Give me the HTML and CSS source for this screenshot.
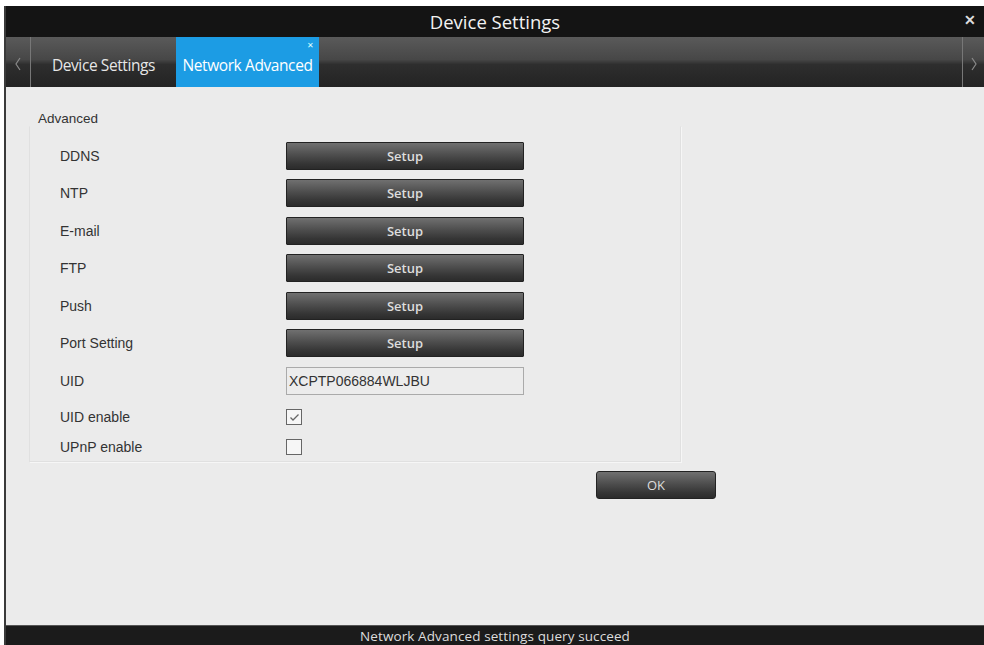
FILE: index.html
```html
<!DOCTYPE html>
<html lang="en">
<head>
  <meta charset="UTF-8">
  <title>Device Settings</title>
  <link rel="stylesheet" href="styles.css">
</head>
<body>
  <div class="window">
    <div class="titlebar">
      <span class="title">Device Settings</span>
      <span class="close">&#x2715;</span>
    </div>

    <div class="tabbar">
      <div class="arrow left">
        <svg width="8" height="14" viewBox="0 0 8 14"><polyline points="6,1 2,7 6,13" fill="none" stroke="#8a8a8a" stroke-width="1.2"/></svg>
      </div>
      <div class="tab">Device Settings</div>
      <div class="tab active">
        Network Advanced
        <span class="tab-close">&#x2715;</span>
      </div>
      <div class="tab-fill"></div>
      <div class="arrow right">
        <svg width="8" height="14" viewBox="0 0 8 14"><polyline points="2,1 6,7 2,13" fill="none" stroke="#8a8a8a" stroke-width="1.2"/></svg>
      </div>
    </div>

    <div class="content">
      <div class="group-title">Advanced</div>
      <div class="group">
        <div class="row"><span class="lbl">DDNS</span><button class="setup">Setup</button></div>
        <div class="row"><span class="lbl">NTP</span><button class="setup">Setup</button></div>
        <div class="row"><span class="lbl">E-mail</span><button class="setup">Setup</button></div>
        <div class="row"><span class="lbl">FTP</span><button class="setup">Setup</button></div>
        <div class="row"><span class="lbl">Push</span><button class="setup">Setup</button></div>
        <div class="row"><span class="lbl">Port Setting</span><button class="setup">Setup</button></div>
        <div class="row"><span class="lbl">UID</span><input class="uid" type="text" value="XCPTP066884WLJBU"></div>
        <div class="row check"><span class="lbl">UID enable</span>
          <span class="box">
            <svg width="13" height="13" viewBox="0 0 13 13"><polyline points="2.5,6.5 5,9 10.5,3.5" fill="none" stroke="#666" stroke-width="1.3"/></svg>
          </span>
        </div>
        <div class="row check"><span class="lbl">UPnP enable</span><span class="box"></span></div>
      </div>
      <div class="actions">
        <button class="ok">OK</button>
      </div>
    </div>

    <div class="statusbar">Network Advanced settings query succeed</div>
  </div>
</body>
</html>
```

FILE: styles.css
```css
body { margin: 0; background: #fff; font-family: "Liberation Sans", Arial, sans-serif; }

.window { margin: 6px 0 0 4px; width: 980px; height: 639px; display: flex; flex-direction: column; background: #ebebeb; border-left: 2px solid #3a3a3a; box-sizing: border-box; }

.titlebar { height: 31px; background: #141414; display: flex; align-items: center; justify-content: center; position: relative; }
.title { font-family: "Open Sans", sans-serif; font-size: 18.5px; color: #f2f2f2; }
.close { position: absolute; right: 8px; top: 6px; color: #ddd; font-size: 14px; font-weight: bold; }

.tabbar { height: 50px; display: flex; background: linear-gradient(#5a5a5a, #474747 45%, #2e2e2e 55%, #232323); }
.arrow { width: 24px; display: flex; align-items: center; justify-content: center; padding-top: 4px; }
.arrow.left { border-right: 1px solid #777; }
.arrow.right { width: 21px; border-left: 1px solid #777; }
.tab { width: 145px; display: flex; align-items: center; justify-content: center; padding-top: 6px; box-sizing: border-box; font-family: "Open Sans", sans-serif; font-size: 15.5px; letter-spacing: -0.4px; color: #e6e6e6; white-space: nowrap; }
.tab.active { width: 143px; background: #1c9ce4; color: #fff; position: relative; }
.tab-close { position: absolute; right: 5px; top: 2px; font-size: 8px; color: #dff; }
.tab-fill { flex: 1; }

.content { flex: 1; padding: 24px 0 0 23px; position: relative; }
.group-title { font-size: 13.5px; color: #333; margin-left: 9px; }
.group { width: 652px; height: 336px; box-sizing: border-box; margin-top: 0; padding: 14.5px 0 0 30px; border: 1px solid #e0e0e0; border-top-color: #ebebeb; box-shadow: 1px 1px 0 #f6f6f6; }

.row { display: flex; align-items: center; height: 28px; margin-bottom: 9.6px; }
.lbl { width: 226px; font-size: 14px; color: #333; }
.setup { width: 238px; height: 28px; border: 1px solid #222; border-radius: 1px; background: linear-gradient(#707070, #4e4e4e 45%, #353535 80%, #2b2b2b); color: #ddd; font-family: "Open Sans", sans-serif; font-weight: 600; font-size: 13px; padding: 0; }
.uid { width: 238px; height: 28px; box-sizing: border-box; border: 1px solid #aaa; background: #ececec; padding: 0 2px; font-family: "Liberation Sans", Arial, sans-serif; font-size: 14px; color: #333; }

.row.check { height: 16px; margin: 14px 0 0; }
.box { width: 14px; height: 14px; border: 1px solid #666; background: #f6f6f6; display: flex; align-items: center; justify-content: center; }

.actions { width: 687px; display: flex; justify-content: flex-end; margin-top: 9px; }
.ok { width: 120px; height: 28px; border: 1px solid #222; border-radius: 3px; background: linear-gradient(#707070, #4e4e4e 45%, #353535 80%, #2b2b2b); color: #ddd; font-family: "Open Sans", sans-serif; font-size: 13px; padding: 0; }

.statusbar { height: 20px; background: #1b1b1b; border-top: 1px solid #555; color: #ddd; font-family: "Open Sans", sans-serif; font-size: 13.5px; letter-spacing: 0.1px; display: flex; align-items: center; justify-content: center; box-sizing: border-box; }
```
